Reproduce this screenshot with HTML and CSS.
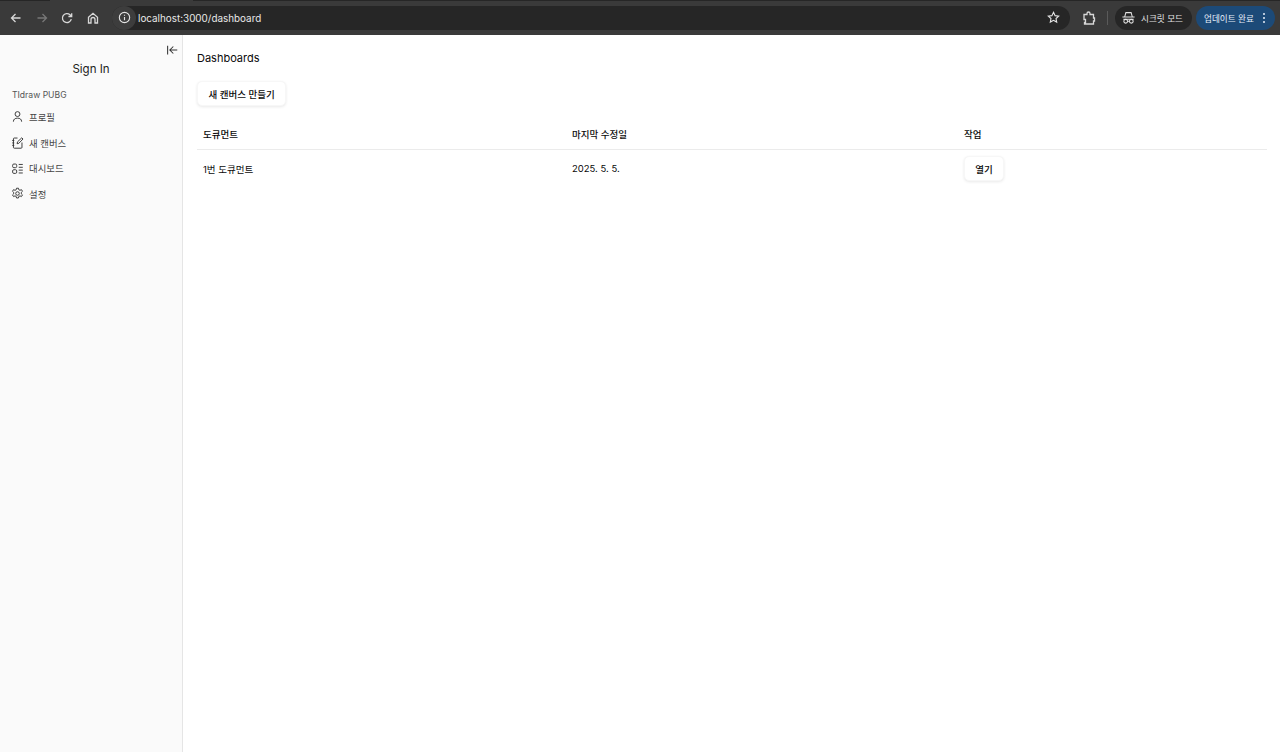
FILE: index.html
```html
<!DOCTYPE html>
<html lang="ko">
<head>
<meta charset="utf-8">
<title>Dashboards</title>
<link rel="stylesheet" href="styles.css">
</head>
<body>
<header class="chrome">
  <div class="chrome-left">
    <svg class="ci" viewBox="0 0 16 16"><path d="M12.500 8H3.500M7.500 4 3.500 8l4 4"/></svg>
    <svg class="ci dim" viewBox="0 0 16 16"><path d="M3.500 8h9M8.500 4l4 4-4 4"/></svg>
    <svg class="ci" viewBox="0 0 16 16"><path d="M12.300 9.200A4.500 4.500 0 1 1 11 4.800L12.700 6.500M12.700 3.200v3.300H9.400"/></svg>
    <svg class="ci" viewBox="0 0 16 16"><path d="M3.500 7.200 8 3.300l4.500 3.900v5.800H10V9.500a2 2 0 0 0-4 0V13H3.500z"/></svg>
  </div>
  <div class="omnibox">
    <span class="info"><svg viewBox="0 0 16 16"><circle cx="8" cy="8" r="5.500"/><path d="M8 7.500v3.500M8 5v1"/></svg></span>
    <span class="url">localhost:3000/dashboard</span>
    <svg class="star" viewBox="0 0 16 16"><path d="m8 2.500 1.700 3.500 3.800.5-2.800 2.600.7 3.800L8 11l-3.400 1.900.7-3.800L2.500 6.500l3.800-.5z"/></svg>
  </div>
  <svg class="ci ext" viewBox="0 0 16 16"><path d="M3 4.500h3V3.500a1.500 1.500 0 0 1 3 0v1h3.500V8h1v3h-1v3H3.500v-1.500h1v-3h-1.500z"/></svg>
  <span class="sep"></span>
  <div class="pill incognito">
    <svg viewBox="0 0 16 16"><path d="M1.500 7.500h13M4 7 5.200 2.800h5.600L12 7M2.500 9.800h11"/><circle cx="5" cy="12" r="2"/><circle cx="11" cy="12" r="2"/><path d="M7 12h2"/></svg>
    <span>시크릿 모드</span>
  </div>
  <div class="pill update">
    <span>업데이트 완료</span>
    <span class="kebab"><i></i><i></i><i></i></span>
  </div>
</header>
<div class="app">
  <aside class="sidebar">
    <div class="collapse-row">
      <svg viewBox="0 0 16 16"><path d="M3 3v10M14 8H6M9.500 4 5.500 8l4 4"/></svg>
    </div>
    <div class="signin">Sign In</div>
    <div class="group-label">TIdraw PUBG</div>
    <nav class="nav">
      <a class="nav-item"><svg viewBox="0 0 16 16"><circle cx="8" cy="5" r="3"/><path d="M3 14.500V14c0-2.500 2-4 5-4s5 1.500 5 4v.5"/></svg><span>프로필</span></a>
      <a class="nav-item"><svg viewBox="0 0 16 16"><path d="M8 2.500H4a1 1 0 0 0-1 1V14a1 1 0 0 0 1 1h8.500a1 1 0 0 0 1-1V8M1.500 5.500H4M1.500 8.500H4M1.500 11.500H4M7.500 9.500l.5-2.300 5.300-5 1.500 1.500-5.200 5.300z"/></svg><span>새 캔버스</span></a>
      <a class="nav-item"><svg viewBox="0 0 16 16"><rect x="2" y="2.500" width="5" height="4.500" rx="1.500"/><rect x="2" y="9.500" width="5" height="4.500" rx="1.500"/><path d="M9.500 3h5M9.500 6.500h5M9.500 10h5M9.500 13.500h5"/></svg><span>대시보드</span></a>
      <a class="nav-item"><svg viewBox="0 0 16 16"><circle cx="8" cy="8" r="2.200"/><path d="M6.800 1.500h2.400l.4 1.900 1.500.7 1.700-.9 1.300 2.100-1.400 1.300v1.800l1.400 1.300-1.300 2.100-1.700-.9-1.500.7-.4 1.900H6.800l-.4-1.900-1.500-.7-1.700.9-1.300-2.100 1.400-1.300V6.600L1.900 5.300l1.300-2.100 1.700.9 1.500-.7z"/></svg><span>설정</span></a>
    </nav>
  </aside>
  <main class="main">
    <h1 class="title">Dashboards</h1>
    <button class="btn btn-new">새 캔버스 만들기</button>
    <div class="table">
      <div class="row head">
        <div class="c1">도큐먼트</div>
        <div class="c2">마지막 수정일</div>
        <div class="c3">작업</div>
      </div>
      <div class="row body-row">
        <div class="c1">1번 도큐먼트</div>
        <div class="c2">2025. 5. 5.</div>
        <div class="c3"><button class="btn btn-open">열기</button></div>
      </div>
    </div>
  </main>
</div>
</body>
</html>
```
FILE: styles.css
```css
* { box-sizing: border-box; }
html, body { margin: 0; height: 100%; }
body {
  width: 1280px; height: 752px; overflow: hidden;
  font-family: Inter, "Noto Sans CJK KR", sans-serif;
  background: #fff; color: #0a0a0a;
  display: flex; flex-direction: column;
}
.chrome {
  height: 35px; flex: none;
  background: linear-gradient(to right, #262626 50px, #3a3a3a 50px, #3a3a3a 193px, #262626 193px) top / 100% 1px no-repeat, #3a3a3a;
  display: flex; align-items: center; padding: 2px 5px 2px 0; color: #e3e3e3;
}
.chrome-left { display: flex; align-items: center; gap: 9.670px; padding-left: 8px; width: 112px; }
.ci { width: 16px; height: 16px; fill: none; stroke: #d8d8d8; stroke-width: 1.300; flex: none; }
.ci.dim { stroke: #777; }
.omnibox {
  width: 958px; height: 24px; background: #262626; border-radius: 12px;
  display: flex; align-items: center; flex: none;
}
.info { width: 24px; height: 24px; border-radius: 50%; background: #3d3d3d; display: flex; align-items: center; justify-content: center; }
.info svg { width: 15px; height: 15px; fill: none; stroke: #e3e3e3; stroke-width: 1.200; }
.url { font-size: 9.900px; margin-left: 2px; color: #e8e8e8; flex: 1; }
.star { width: 15px; height: 15px; fill: none; stroke: #e3e3e3; stroke-width: 1.200; margin-right: 9px; }
.ext { margin-left: 11px; }
.sep { width: 1px; height: 14px; background: #5a5a5a; margin: 0 7px 0 10px; flex: none; }
.pill { height: 24px; border-radius: 12px; display: flex; align-items: center; font-size: 8.600px; flex: none; }
.incognito { width: 77px; background: #262626; padding-left: 6px; gap: 5px; color: #e3e3e3; }
.incognito svg { width: 15px; height: 15px; fill: none; stroke: #e3e3e3; stroke-width: 1.100; }
.update { width: 79px; margin-left: 4px; background: #1c4a78; color: #e6eef8; padding-left: 8px; gap: 9px; }
.kebab { display: flex; flex-direction: column; gap: 2px; }
.kebab i { width: 2px; height: 2px; background: #e6eef8; border-radius: 50%; display: block; }
.app { flex: 1; display: flex; min-height: 0; }
.sidebar { width: 183px; flex: none; background: #fafafa; border-right: 1px solid #e5e5e5; padding: 0 8px; }
.collapse-row { display: flex; justify-content: flex-end; padding: 8px 0 0; height: 24px; }
.collapse-row svg { width: 14px; height: 14px; margin-right: -5px; fill: none; stroke: #333; stroke-width: 1.200; }
.signin { text-align: center; font-size: 11.500px; line-height: 16px; margin-top: 2px; color: #222; }
.group-label { font-size: 8.600px; color: #555; margin: 11px 0 0 4px; line-height: 14px; }
.nav { display: flex; flex-direction: column; margin-top: 2px; }
.nav-item { display: flex; align-items: center; height: 25.700px; padding-left: 3px; gap: 5px; font-size: 9.400px; color: #444; }
.nav-item svg { width: 13px; height: 13px; fill: none; stroke: #333; stroke-width: 1.150; flex: none; }
.main { flex: 1; padding: 0 13px 0 14px; min-width: 0; }
.title { font-size: 11px; font-weight: 400; margin: 16px 0 0; line-height: 14px; color: #0a0a0a; }
.btn {
  font-family: inherit; border: 1px solid #f7f7f7; background: #fff; border-radius: 5px;
  box-shadow: 0 1px 3px rgba(0,0,0,.09); color: #0a0a0a; font-weight: 500; padding: 0; display: block;
}
.btn-new { width: 89px; height: 25px; font-size: 9.500px; margin-top: 16px; }
.table { margin-top: 15px; font-size: 9.500px; }
.row { display: grid; grid-template-columns: 369px 392px 1fr; align-items: center; padding-left: 6px; }
.head { height: 29px; padding-bottom: 2px; border-bottom: 1px solid #ebebeb; font-weight: 500; }
.body-row { height: 37px; }
.btn-open { width: 40px; height: 25px; font-size: 9.500px; }
```
